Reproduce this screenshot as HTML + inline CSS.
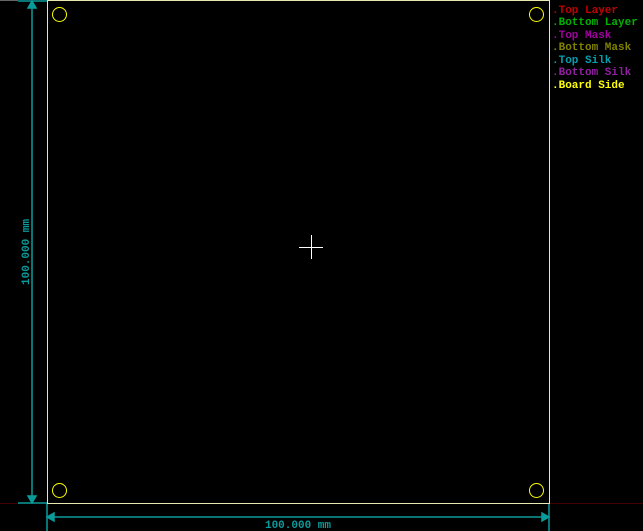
<!DOCTYPE html>
<html><head><style>
html,body{margin:0;padding:0;background:#000;width:643px;height:531px;overflow:hidden}
svg{display:block}
text{font-family:"Liberation Mono",monospace;font-weight:bold}
</style></head><body>
<svg width="643" height="531" xmlns="http://www.w3.org/2000/svg">
<rect width="643" height="531" fill="#000"/>
<line x1="0" y1="0.5" x2="18" y2="0.5" stroke="#666"/>
<line x1="0" y1="503.5" x2="18" y2="503.5" stroke="#400"/>
<line x1="550" y1="503.5" x2="643" y2="503.5" stroke="#400"/>
<!-- extension lines -->
<g stroke="#0a9a9a" stroke-width="1.5" fill="#0a9a9a">
<line x1="18" y1="1" x2="47" y2="1"/>
<line x1="18" y1="503" x2="47" y2="503"/>
<line x1="47" y1="503" x2="47" y2="531"/>
<line x1="549" y1="503" x2="549" y2="531"/>
<line x1="32" y1="1" x2="32" y2="503"/>
<line x1="47" y1="517" x2="549" y2="517"/>
<path d="M32 1 L28 8 L36 8 Z"/>
<path d="M32 503 L28 496 L36 496 Z"/>
<path d="M47 517 L54 513 L54 521 Z"/>
<path d="M549 517 L542 513 L542 521 Z"/>
</g>
<rect x="47.5" y="0.5" width="502" height="503" fill="none" stroke="#e8e8b0" stroke-width="1"/>
<g fill="none" stroke="#ffff00" stroke-width="1">
<circle cx="59.5" cy="14.5" r="7"/>
<circle cx="536.5" cy="14.5" r="7"/>
<circle cx="59.5" cy="490.5" r="7"/>
<circle cx="536.5" cy="490.5" r="7"/>
</g>
<g stroke="#fff" stroke-width="1">
<line x1="299" y1="247.5" x2="323" y2="247.5"/>
<line x1="311.5" y1="235" x2="311.5" y2="259"/>
</g>
<text x="298" y="528" font-size="11" fill="#0a9a9a" text-anchor="middle">100.000 mm</text>
<text transform="translate(29,252) rotate(-90)" font-size="11" fill="#0a9a9a" text-anchor="middle">100.000 mm</text>
<g font-size="11">
<text x="552" y="13" fill="#c00000">.Top Layer</text>
<text x="552" y="25" fill="#00b000">.Bottom Layer</text>
<text x="552" y="38" fill="#a000a0">.Top Mask</text>
<text x="552" y="50" fill="#808000">.Bottom Mask</text>
<text x="552" y="63" fill="#00a0b0">.Top Silk</text>
<text x="552" y="75" fill="#9020a0">.Bottom Silk</text>
<text x="552" y="88" fill="#ffff00">.Board Side</text>
</g>
</svg>
</body></html>
